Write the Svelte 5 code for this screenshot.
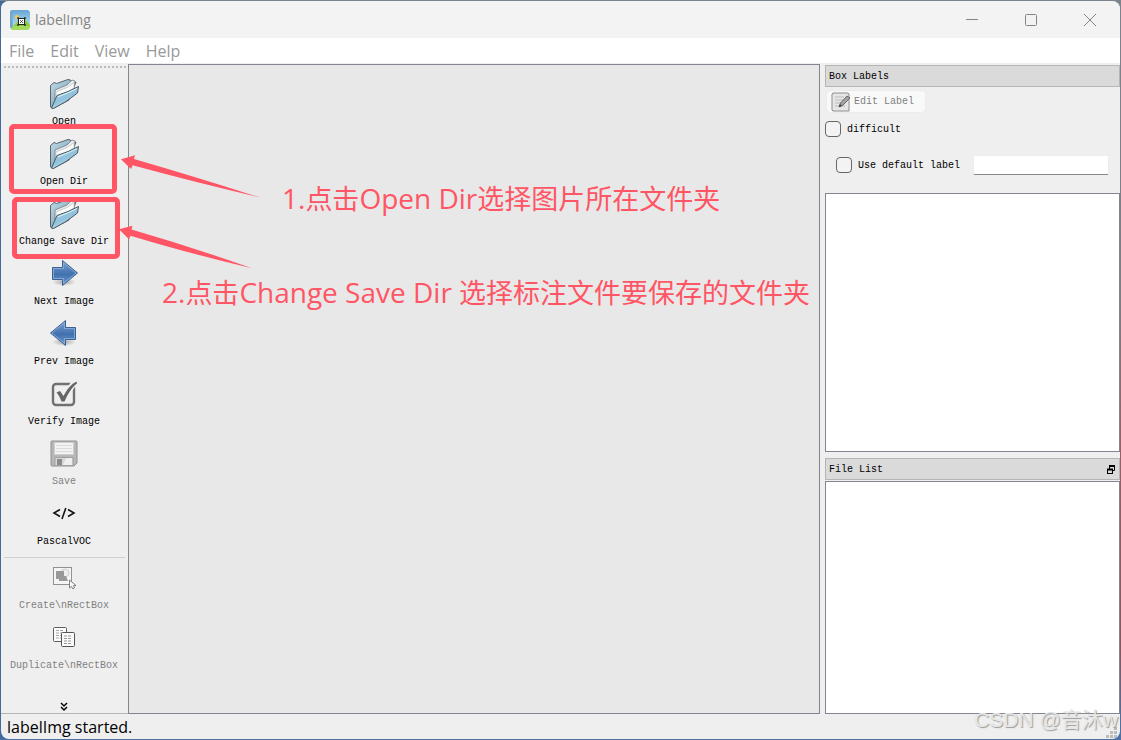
<script lang="ts">
	type Tool = { label: string; icon: string; disabled?: boolean };

	const menus = ['File', 'Edit', 'View', 'Help'];

	const fileTools: Tool[] = [
		{ label: 'Open', icon: 'folder' },
		{ label: 'Open Dir', icon: 'folder' },
		{ label: 'Change Save Dir', icon: 'folder' },
		{ label: 'Next Image', icon: 'next' },
		{ label: 'Prev Image', icon: 'prev' },
		{ label: 'Verify Image', icon: 'verify' },
		{ label: 'Save', icon: 'save', disabled: true },
		{ label: 'PascalVOC', icon: 'format' }
	];

	const boxTools: Tool[] = [
		{ label: 'Create\\nRectBox', icon: 'create', disabled: true },
		{ label: 'Duplicate\\nRectBox', icon: 'duplicate', disabled: true }
	];

	let difficult = $state(false);
	let useDefault = $state(false);
	let defaultLabel = $state('');
</script>

{#snippet toolIcon(name: string)}
	<svg class="tool-icon" viewBox="0 0 32 32" aria-hidden="true">
		{#if name === 'folder'}
			<path d="M2.500 7.500 6 4.500 8.500 5.500 20 1.500 22.500 2 24 5 28 4 21 22 4.500 30.500 2.500 29z" fill="url(#folder-back)" stroke="#59626a" />
			<path d="M7 12 19 7 24 2 27 3 26 11 7 24z" fill="#e9eaec" stroke="#777d82" stroke-width="0.8" />
			<path d="M8 14 20 9 26 4.500 26 10 8 22z" fill="#fbfbfb" stroke="#b4b8bb" stroke-width="0.6" />
			<path d="M9 17.500 20 13.500 30.500 8.500 29.500 15 18 23.500 5.500 30.500 3.500 30z" fill="url(#folder-front)" stroke="#4c5961" />
			<path d="M10 18.800 20 14.800 29 10.500" fill="none" stroke="#e0f1f8" />
		{:else if name === 'next' || name === 'prev'}
			<ellipse cx="16" cy="24" rx="12" ry="4" fill="url(#arrow-shadow)" />
			<g transform={name === 'prev' ? 'translate(32 0) scale(-1 1)' : undefined}>
				<path d="M4.500 9.500H14.500V2.500L29.500 15 14.500 27.500V21.500H4.500z" fill="url(#arrow-fill)" stroke="#3c6191" />
				<path d="M5.500 10.500H15.500V4.500L28 15 15.500 25.500V20.500H5.500z" fill="none" stroke="#8fb2de" stroke-width="0.8" />
			</g>
		{:else if name === 'verify'}
			<rect x="5" y="6" width="21" height="21" rx="3" fill="none" stroke="#717171" stroke-width="2.400" />
			<path d="M10 14.500 15 21 26 5" fill="none" stroke="#efefef" stroke-width="6" />
			<path d="M8.500 14.500 12 13 15.500 18C19 11.500 22.500 6.500 28.500 3.500L29 5.500C23.500 9.500 20 16 16.500 23.500H13.500C12 19.500 10.500 16.500 8.500 14.500z" fill="#666" />
		{:else if name === 'save'}
			<path d="M4 3H28Q29 3 29 4V25L26 28H4Q3 28 3 27V4Q3 3 4 3z" fill="#b7b7b7" stroke="#929292" />
			<rect x="6.500" y="4.500" width="19" height="12" fill="#f3f3f3" stroke="#cecece" />
			<path d="M8 7.500H24M8 10.500H24M8 13.500H24" stroke="#dadada" />
			<path d="M7 27.500V19.500H25V27.500z" fill="#d8d8d8" stroke="#a0a0a0" />
			<path d="M18 20H24V27H15z" fill="#efefef" />
			<rect x="9" y="21" width="5" height="6" fill="#8c8c8c" />
		{:else if name === 'format'}
			<path d="M12 11.500 6 15 12 18.500M20 11.500 26 15 20 18.500M17.800 10 14 21" fill="none" stroke="#151515" stroke-width="1.600" />
		{:else if name === 'create'}
			<rect x="5.500" y="5.500" width="18" height="17" fill="#f5f5f5" stroke="#333" stroke-dasharray="1 1" />
			<circle cx="17" cy="11" r="4" fill="#eee" stroke="#ccc" />
			<path d="M8 9H16V14H18L20 19H11V17H8z" fill="#999" />
			<path d="M21.500 18V26L23.500 24.500 25 27 26.500 26 25.500 23.500H28z" fill="#f7f7f7" stroke="#777" stroke-width="0.900" />
		{:else}
			<rect x="5.500" y="5.500" width="13" height="14" rx="1" fill="#fafafa" stroke="#606060" />
			<path d="M8 8.500H16M8 11H16M8 13.500H16M8 16H16" stroke="#aaa" stroke-dasharray="3 1" />
			<rect x="13.500" y="10.500" width="13" height="14" rx="1" fill="#fafafa" stroke="#555" />
			<path d="M16 14H24M16 16.500H24M16 19H24M16 21.500H24" stroke="#999" stroke-dasharray="3 1" />
		{/if}
	</svg>
{/snippet}

{#snippet toolButton(tool: Tool)}
	<button class="tool" disabled={tool.disabled}>
		{@render toolIcon(tool.icon)}
		<span>{tool.label}</span>
	</button>
{/snippet}

<svg class="defs" aria-hidden="true">
	<defs>
		<linearGradient id="folder-back" x1="0" y1="0" x2="1" y2="1">
			<stop offset="0" stop-color="#c3dde9" />
			<stop offset="1" stop-color="#5b8ba3" />
		</linearGradient>
		<linearGradient id="folder-front" x1="0" y1="0" x2="0.6" y2="1">
			<stop offset="0" stop-color="#add5e8" />
			<stop offset="0.600" stop-color="#90c2db" />
			<stop offset="1" stop-color="#c4e5f2" />
		</linearGradient>
		<linearGradient id="arrow-fill" x1="0" y1="0" x2="0" y2="1">
			<stop offset="0" stop-color="#7da4d4" />
			<stop offset="0.550" stop-color="#4171ae" />
			<stop offset="1" stop-color="#6f9bd0" />
		</linearGradient>
		<radialGradient id="arrow-shadow">
			<stop offset="0" stop-color="#000" stop-opacity="0.300" />
			<stop offset="1" stop-color="#000" stop-opacity="0" />
		</radialGradient>
		<linearGradient id="logo-sky" x1="0" y1="0" x2="0" y2="1">
			<stop offset="0" stop-color="#66a5d3" />
			<stop offset="1" stop-color="#b7ddf0" />
		</linearGradient>
	</defs>
</svg>

<div class="desktop">
	<div class="window">
		<header class="titlebar">
			<svg class="logo" viewBox="0 0 20 20" aria-hidden="true">
				<path d="M0 2Q0 0 2 0L4 1V17L1 19 0 17z" fill="#72a8cd" />
				<path d="M2 0H18L20 2V16H3z" fill="url(#logo-sky)" />
				<path d="M3 16 8 11 11 14 15 9 20 15V18H3z" fill="#8acb3e" />
				<path d="M3 16H20V18L18 20H2L1 19z" fill="#a5d95f" />
				<circle cx="7" cy="7" r="2" fill="#f4d14c" />
				<rect x="8.500" y="8.500" width="6" height="6" fill="#fff" stroke="#222" />
				<path d="M10 10 13 13M13 10 10 13" stroke="#222" stroke-width="0.7" />
				<path d="M7 8h2M8 7v2M14 8h2M15 7v2M7 15h2M8 14v2M14 15h2M15 14v2" stroke="#222" stroke-width="0.8" />
			</svg>
			<span class="title">labelImg</span>
			<div class="controls">
				<button aria-label="Minimize">
					<svg viewBox="0 0 14 14"><path d="M1 6.500H13" /></svg>
				</button>
				<button aria-label="Maximize">
					<svg viewBox="0 0 14 14"><rect x="1.500" y="1.500" width="11" height="11" rx="1" /></svg>
				</button>
				<button aria-label="Close">
					<svg viewBox="0 0 14 14"><path d="M1 1 13 13M13 1 1 13" /></svg>
				</button>
			</div>
		</header>

		<nav class="menubar">
			{#each menus as menu}
				<button>{menu}</button>
			{/each}
		</nav>

		<main>
			<aside class="toolbar">
				<div class="handle"></div>
				{#each fileTools as tool}
					{@render toolButton(tool)}
				{/each}
				<hr />
				{#each boxTools as tool}
					{@render toolButton(tool)}
				{/each}
				<button class="more" aria-label="More tools">
					<svg viewBox="0 0 8 10"><path d="M1 1 4 4 7 1M1 5 4 8 7 5" /></svg>
				</button>
			</aside>

			<section class="canvas" aria-label="Canvas"></section>

			<div class="docks">
				<section class="dock labels">
					<h2>Box Labels</h2>
					<div class="options">
						<button class="edit" disabled>
							<svg viewBox="0 0 20 20" aria-hidden="true">
								<path d="M2 1H17L18 2V19H2L1 18V2z" fill="#e6e6e6" stroke="#8c8c8c" />
								<path d="M4 5H13M4 8H12M4 11H10M4 14H14" stroke="#bbb" />
								<path d="M8 15 9.500 11 16 4 19 6 12 13z" fill="#a4a4a4" stroke="#666" />
								<path d="M8 15 9 12 11 14z" fill="#444" />
							</svg>
							Edit Label
						</button>
						<label class="check">
							<input type="checkbox" bind:checked={difficult} />
							<span>difficult</span>
						</label>
						<div class="default-row">
							<label class="check">
								<input type="checkbox" bind:checked={useDefault} />
								<span>Use default label</span>
							</label>
							<input class="default-label" type="text" aria-label="Default label" bind:value={defaultLabel} />
						</div>
					</div>
					<div class="list"></div>
				</section>

				<section class="dock files">
					<h2>
						File List
						<button class="float" aria-label="Float panel">
							<svg viewBox="0 0 10 10">
								<path d="M3.500 4V1.500H8.500V5.500H6" />
								<path d="M3 1H9" stroke-width="2" />
								<rect x="1.500" y="4.500" width="5" height="4" />
								<path d="M1 4.500H7" stroke-width="2" />
							</svg>
						</button>
					</h2>
					<div class="list"></div>
				</section>
			</div>
		</main>

		<footer>
			<span>labelImg started.</span>
			<svg class="grip" viewBox="0 0 12 12" aria-hidden="true">
				<path d="M8 0h3v3h-3zM4 4h3v3h-3zM8 4h3v3h-3zM0 8h3v3h-3zM4 8h3v3h-3zM8 8h3v3h-3z" fill="#bcbcbc" />
			</svg>
		</footer>
	</div>

	<!-- hand-drawn notes on top of the window -->
	<div class="mark open-dir"></div>
	<div class="mark save-dir"></div>
	<svg class="arrows" viewBox="0 0 280 280" aria-hidden="true">
		<path d="M121 159.300 135 155.300 134 159Q196 177 260.700 197.700 190 181 132.700 165.300L131 169z" />
		<path d="M119 229.300 132.500 225.700 131.500 229.500Q192 247 252 268.300 184 252 130.500 235.700L129 239.300z" />
	</svg>
	<p class="note first">1.<span>点击</span>Open Dir<span>选择图片所在文件夹</span></p>
	<p class="note second">2.<span>点击</span>Change Save Dir <span>选择标注文件要保存的文件夹</span></p>
	<span class="watermark">CSDN @音沐w</span>
</div>

<style>
	:global(body) {
		margin: 0;
	}

	.desktop,
	.desktop * {
		box-sizing: border-box;
	}

	.defs {
		position: absolute;
		width: 0;
		height: 0;
	}

	.desktop {
		position: relative;
		min-height: 100vh;
		padding: 1px;
		display: flex;
		overflow: hidden;
		background: linear-gradient(#7b838c 0%, #7d7f86 40%, #9c5f68 60%, #8a5560 88%, #4a72a8 98%);
		color: #000;
		font: 10px/14px 'Liberation Mono', monospace;
	}

	.window {
		flex: 1;
		display: flex;
		flex-direction: column;
		border-radius: 8px;
		overflow: hidden;
		background: #efefef;
		box-shadow: -8px 0 0 #44699b;
	}

	button {
		padding: 0;
		border: 0;
		background: none;
		color: inherit;
		font: inherit;
	}

	.titlebar {
		display: flex;
		align-items: center;
		height: 37px;
		padding: 0 1px 0 9px;
		background: #f3f3f3;
	}

	.logo {
		width: 20px;
		height: 20px;
	}

	.title {
		margin-left: 5px;
		color: #858585;
		font: 14px/20px 'Open Sans', sans-serif;
	}

	.controls {
		display: flex;
		margin-left: auto;
	}

	.controls button {
		display: grid;
		place-items: center;
		width: 59px;
		height: 34px;
	}

	.controls svg {
		width: 14px;
		height: 14px;
		fill: none;
		stroke: #858585;
	}

	.menubar {
		display: flex;
		gap: 16px;
		height: 26px;
		padding: 0 8px;
		background: #fff;
		border-bottom: 1px solid #efefef;
		color: #999;
		font: 16px/26px 'Open Sans', sans-serif;
	}

	main {
		flex: 1;
		display: flex;
	}

	.toolbar {
		display: flex;
		flex-direction: column;
		width: 127px;
		padding: 2px 1px 1px 0;
		border-bottom: 1px solid #b5b5b5;
	}

	.handle {
		height: 2px;
		margin: 0 0 8px 3px;
		background: repeating-linear-gradient(90deg, #bbb 0 2px, transparent 2px 4px);
	}

	.tool {
		display: flex;
		flex-direction: column;
		align-items: center;
		gap: 5px;
		height: 60px;
		padding: 2px 0 7px;
		white-space: nowrap;
	}

	.tool:disabled,
	.edit:disabled {
		color: #808080;
	}

	.tool-icon {
		width: 32px;
		height: 32px;
	}

	hr {
		width: 121px;
		height: 1px;
		margin: 1px 0 2px 3px;
		border: 0;
		background: #cfcfcf;
	}

	.more {
		display: flex;
		justify-content: center;
		margin-top: auto;
	}

	.more svg {
		width: 8px;
		height: 10px;
		fill: none;
		stroke: #000;
		stroke-width: 1.5;
	}

	.canvas {
		flex: 1;
		background: #e8e8e8;
		border: 1px solid #83868f;
	}

	.docks {
		display: flex;
		flex-direction: column;
		gap: 6px;
		width: 300px;
		padding: 1px 0 0 5px;
	}

	.dock {
		display: flex;
		flex-direction: column;
	}

	.labels {
		flex: 387;
	}

	.files {
		flex: 256;
	}

	h2 {
		display: flex;
		align-items: center;
		justify-content: space-between;
		height: 22px;
		margin: 0;
		padding: 2px 3px 0;
		background: #dadada;
		border: 1px solid #b5b5b5;
		font: inherit;
	}

	.options {
		display: flex;
		flex-direction: column;
		align-items: flex-start;
		padding: 3px 0 18px;
	}

	.edit {
		display: flex;
		align-items: center;
		gap: 3px;
		height: 23px;
		margin-left: 1px;
		padding: 0 11px 0 4px;
		background: #f9f9f9;
		border: 1px solid #ececec;
		border-radius: 4px;
	}

	.edit svg {
		width: 20px;
		height: 20px;
	}

	.check {
		display: flex;
		align-items: center;
		gap: 6px;
		height: 16px;
		margin-top: 8px;
	}

	.check span {
		padding-top: 2px;
	}

	.check input {
		appearance: none;
		width: 16px;
		height: 16px;
		margin: 0;
		background: #f3f3f3;
		border: 1px solid #666;
		border-radius: 4px;
	}

	.check input:checked {
		background: #44699b;
	}

	.default-row {
		display: flex;
		align-items: center;
		justify-content: space-between;
		align-self: stretch;
		margin-top: 18px;
		padding: 0 11px;
	}

	.default-row .check {
		margin: 0;
	}

	.default-label {
		width: 136px;
		height: 20px;
		padding: 0 4px;
		background: #fff;
		border: 1px solid #ececec;
		border-bottom-color: #868686;
		border-radius: 2px;
		font: inherit;
	}

	.list {
		flex: 1;
		background: #fff;
		border: 1px solid #83868f;
	}

	.files .list {
		margin-top: 1px;
	}

	.float svg {
		display: block;
		width: 10px;
		height: 10px;
		fill: none;
		stroke: #000;
	}

	footer {
		display: flex;
		align-items: flex-end;
		justify-content: space-between;
		height: 25px;
		padding: 0 2px 0 6px;
		font: 16px/24px 'Open Sans', sans-serif;
	}

	.grip {
		width: 12px;
		height: 12px;
	}

	.mark {
		position: absolute;
		border: 5px solid #ff5564;
		border-radius: 5px;
	}

	.open-dir {
		left: 9px;
		top: 124px;
		width: 108px;
		height: 70px;
	}

	.save-dir {
		left: 12px;
		top: 197px;
		width: 108px;
		height: 62px;
	}

	.arrows {
		position: absolute;
		left: 0;
		top: 0;
		width: 280px;
		height: 280px;
		fill: #ff5564;
		pointer-events: none;
	}

	.note {
		position: absolute;
		margin: 0;
		color: #ff5564;
		font: 28px/36px 'Open Sans', 'Noto Sans CJK SC', sans-serif;
		white-space: nowrap;
	}

	/* Chinese runs sit a size below the Latin ones */
	.note span {
		font-size: 27px;
	}

	.first {
		left: 282px;
		top: 180px;
	}

	.second {
		left: 162px;
		top: 274px;
	}

	.watermark {
		position: absolute;
		right: 3px;
		bottom: 6px;
		color: #e6e6e6;
		font: 21px/28px 'Liberation Sans', 'Noto Sans CJK SC', sans-serif;
		text-shadow: 1px 1px 1px #999;
	}
</style>
